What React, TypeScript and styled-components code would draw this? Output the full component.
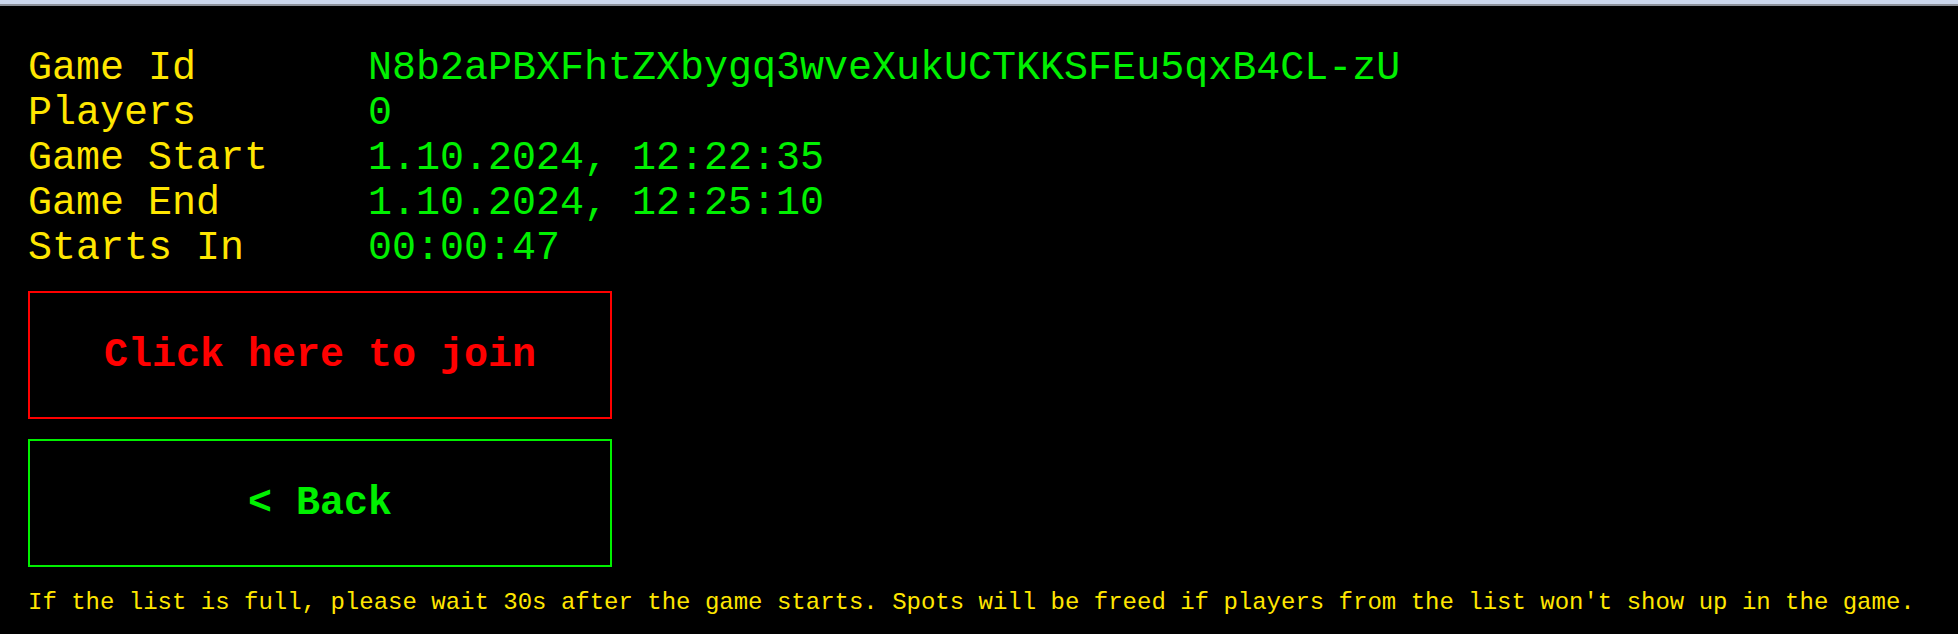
import React from 'react';
import styled, { createGlobalStyle } from 'styled-components';

const GlobalStyle = createGlobalStyle`
  html, body {
    margin: 0;
    padding: 0;
    background: #000;
  }
  body {
    font-family: "Liberation Mono", "Courier New", monospace;
  }
`;

const Page = styled.div`
  min-height: 634px;
  background: #000;
`;

const TopStrip = styled.div`
  height: 4px;
  background: #cbd7ec;
  border-bottom: 2px solid #8b9099;
`;

const Content = styled.main`
  display: flex;
  flex-direction: column;
  align-items: flex-start;
  padding: 40px 28px 0;
`;

const InfoTable = styled.dl`
  display: grid;
  grid-template-columns: 340px auto;
  margin: 0;
  font-size: 40px;
  line-height: normal;
`;

const Label = styled.dt`
  margin: 0;
  color: #ffe600;
  white-space: pre;
`;

const Value = styled.dd`
  margin: 0;
  color: #00f000;
  white-space: pre;
`;

const Actions = styled.div`
  display: flex;
  flex-direction: column;
  gap: 20px;
  margin-top: 20px;
`;

const ActionButton = styled.button<{ $tone: 'red' | 'green' }>`
  display: flex;
  align-items: center;
  justify-content: center;
  box-sizing: border-box;
  width: 584px;
  height: 128px;
  padding: 0;
  background: #000;
  border: 2px solid ${p => (p.$tone === 'red' ? '#ff0000' : '#00f000')};
  color: ${p => (p.$tone === 'red' ? '#ff0000' : '#00f000')};
  font-family: "Liberation Mono", "Courier New", monospace;
  font-size: 40px;
  font-weight: 700;
  cursor: pointer;
`;

const Note = styled.p`
  margin: 22px 0 0;
  color: #ffe600;
  font-size: 24px;
  line-height: normal;
  white-space: nowrap;
`;

const rows: [string, string][] = [
  ['Game Id', 'N8b2aPBXFhtZXbygq3wveXukUCTKKSFEu5qxB4CL-zU'],
  ['Players', '0'],
  ['Game Start', '1.10.2024, 12:22:35'],
  ['Game End', '1.10.2024, 12:25:10'],
  ['Starts In', '00:00:47'],
];

export default function App() {
  return (
    <Page>
      <GlobalStyle />
      <TopStrip />
      <Content>
        <InfoTable>
          {rows.map(([label, value]) => (
            <React.Fragment key={label}>
              <Label>{label}</Label>
              <Value>{value}</Value>
            </React.Fragment>
          ))}
        </InfoTable>
        <Actions>
          <ActionButton $tone="red">Click here to join</ActionButton>
          <ActionButton $tone="green">&lt; Back</ActionButton>
        </Actions>
        <Note>
          If the list is full, please wait 30s after the game starts. Spots will be freed if players from the list won't show up in the game.
        </Note>
      </Content>
    </Page>
  );
}
